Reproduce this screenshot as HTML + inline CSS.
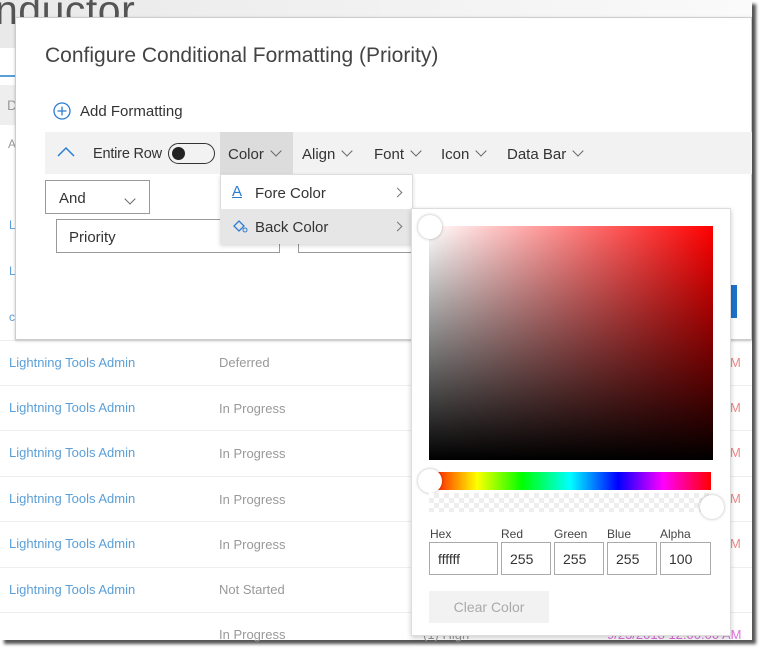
<!DOCTYPE html>
<html><head><style>
*{margin:0;padding:0;box-sizing:border-box}
body{width:765px;height:654px;background:#fff;position:relative;overflow:hidden;font-family:"Liberation Sans",sans-serif}
.a{position:absolute}
.row{position:absolute;left:0;width:752px;height:45px;border-top:1px solid #eee}
.lk{position:absolute;left:9px;color:#5a9fd8;font-size:13px}
.st{position:absolute;left:219px;color:#999;font-size:13px}
.chev{display:inline-block;width:8px;height:8px;border-right:1px solid #666;border-bottom:1px solid #666;transform:rotate(45deg);margin-left:8px;position:relative;top:-4px}
.rchev{position:absolute;width:7px;height:7px;border-right:1px solid #777;border-top:1px solid #777;transform:rotate(45deg)}
.tb{position:absolute;top:146px;font-size:15px;color:#333}
.lbl{position:absolute;top:527px;font-size:12px;color:#444}
.inp{position:absolute;top:542px;height:33px;border:1px solid #aaa;font-size:14px;color:#333;padding:8px 0 0 8px;background:#fff}
</style></head><body>
<div class="a" style="left:0;top:0;width:752px;height:640px;background:#fff;box-shadow:4px 4px 3px #555"></div>
<div class="a" style="left:0;top:0;width:752px;height:48px;background:linear-gradient(90deg,#e9e9e9,#f3f3f3 60%,#fafafa)"></div>
<div class="a" style="left:-5px;top:-13px;font-size:41px;color:#555;letter-spacing:0.5px">nductor</div>
<div class="a" style="left:0;top:75px;width:15px;height:2px;background:#5a9fd8"></div>
<div class="a" style="left:0;top:85px;width:15px;height:40px;background:#eee"></div>
<div class="a" style="left:7px;top:97px;font-size:14px;color:#999">D</div>
<div class="a" style="left:8px;top:137px;font-size:12px;color:#999">A</div>
<div class="a" style="left:9px;top:218px;font-size:12px;color:#5a9fd8">L</div>
<div class="a" style="left:9px;top:264px;font-size:12px;color:#5a9fd8">L</div>
<div class="a" style="left:9px;top:310px;font-size:12px;color:#5a9fd8">c</div>

<div class="row" style="top:340px"><span class="lk" style="top:14px">Lightning Tools Admin</span><span class="st" style="top:14px">Deferred</span><span class="a" style="left:730px;top:14px;color:#e88;font-size:13px">M</span></div>
<div class="row" style="top:385px"><span class="lk" style="top:14px">Lightning Tools Admin</span><span class="st" style="top:15px">In Progress</span><span class="a" style="left:730px;top:14px;color:#e88;font-size:13px">M</span></div>
<div class="row" style="top:430px"><span class="lk" style="top:14px">Lightning Tools Admin</span><span class="st" style="top:15px">In Progress</span><span class="a" style="left:730px;top:14px;color:#e88;font-size:13px">M</span></div>
<div class="row" style="top:476px"><span class="lk" style="top:14px">Lightning Tools Admin</span><span class="st" style="top:15px">In Progress</span><span class="a" style="left:730px;top:14px;color:#e88;font-size:13px">M</span></div>
<div class="row" style="top:521px"><span class="lk" style="top:14px">Lightning Tools Admin</span><span class="st" style="top:15px">In Progress</span><span class="a" style="left:730px;top:14px;color:#e88;font-size:13px">M</span></div>
<div class="row" style="top:567px"><span class="lk" style="top:14px">Lightning Tools Admin</span><span class="st" style="top:14px">Not Started</span></div>
<div class="row" style="top:612px"><span class="st" style="top:14px">In Progress</span><span class="a" style="left:423px;top:14px;color:#999;font-size:13px">(1) High</span><span class="a" style="left:607px;top:14px;color:#e070e0;font-size:13px">9/23/2018 12:00:00 AM</span></div>

<div class="a" style="left:15px;top:17px;width:737px;height:323px;background:#fff;border:1px solid #ccc;box-shadow:0 1px 3px rgba(0,0,0,.2)"></div>
<div class="a" style="left:45px;top:44px;font-size:21px;color:#444">Configure Conditional Formatting (Priority)</div>
<svg class="a" style="left:53px;top:102px" width="18" height="18"><circle cx="9" cy="9" r="8" fill="none" stroke="#2b7cd3" stroke-width="1.3"/><path d="M9 4.5v9M4.5 9h9" stroke="#2b7cd3" stroke-width="1.3"/></svg>
<div class="a" style="left:80px;top:103px;font-size:15px;color:#333">Add Formatting</div>
<div class="a" style="left:45px;top:132px;width:707px;height:42px;background:#f2f2f2"></div>
<div class="a" style="left:220px;top:132px;width:73px;height:42px;background:#dcdcdc"></div>
<svg class="a" style="left:57px;top:146px" width="18" height="12"><path d="M1 10L9 2l8 8" fill="none" stroke="#2b7cd3" stroke-width="1.5"/></svg>
<div class="tb" style="left:93px;font-size:14.5px;letter-spacing:-0.2px">Entire Row</div>
<div class="a" style="left:168px;top:143px;width:47px;height:21px;border:1.5px solid #333;border-radius:11px"><div class="a" style="left:3px;top:3px;width:13px;height:13px;border-radius:50%;background:#222"></div></div>
<div class="tb" style="left:228px">Color<span class="chev"></span></div>
<div class="tb" style="left:302px">Align<span class="chev"></span></div>
<div class="tb" style="left:374px">Font<span class="chev"></span></div>
<div class="tb" style="left:441px">Icon<span class="chev"></span></div>
<div class="tb" style="left:507px">Data Bar<span class="chev"></span></div>
<div class="a" style="left:45px;top:180px;width:105px;height:34px;border:1px solid #999"></div>
<div class="a" style="left:59px;top:190px;font-size:15px;color:#333">And</div>
<span class="chev a" style="left:118px;top:190px"></span>
<div class="a" style="left:56px;top:219px;width:224px;height:34px;border:1px solid #999;background:#fff"></div>
<div class="a" style="left:69px;top:229px;font-size:15px;color:#333">Priority</div>
<div class="a" style="left:298px;top:240px;width:115px;height:13px;border-left:1px solid #999;border-bottom:1px solid #999"></div>
<div class="a" style="left:731px;top:285px;width:6px;height:33px;background:#1d72c9"></div>

<div class="a" style="left:220px;top:174px;width:193px;height:70px;background:#fff;border:1px solid #ddd;box-shadow:0 2px 4px rgba(0,0,0,.15)"></div>
<div class="a" style="left:220px;top:209px;width:192px;height:35px;background:#e6e6e6"></div>
<div class="a" style="left:232px;top:183px;font-size:15px;color:#2b7cd3;text-decoration:underline">A</div>
<div class="a" style="left:255px;top:185px;font-size:15px;color:#333">Fore Color</div>
<svg class="a" style="left:231px;top:217px" width="18" height="18"><path d="M3 9l5-5 5 5-5 5z" fill="none" stroke="#2b7cd3" stroke-width="1.3"/><circle cx="14" cy="13" r="2" fill="none" stroke="#2b7cd3"/></svg>
<div class="a" style="left:255px;top:219px;font-size:15px;color:#333">Back Color</div>
<div class="rchev" style="left:394px;top:189px"></div>
<div class="rchev" style="left:394px;top:223px"></div>

<div class="a" style="left:411px;top:208px;width:320px;height:428px;background:#fff;border:1px solid #ddd;box-shadow:0 2px 5px rgba(0,0,0,.2)"></div>
<div class="a" style="left:429px;top:226px;width:284px;height:234px;background:linear-gradient(to top,#000,rgba(0,0,0,0)),linear-gradient(to right,#fff,#f00)"></div>
<div class="a" style="left:418px;top:215px;width:24px;height:24px;border-radius:50%;background:#fff;box-shadow:0 0 3px rgba(0,0,0,.3)"></div>
<div class="a" style="left:429px;top:472px;width:282px;height:18px;background:linear-gradient(to right,#f00,#ff0 17%,#0f0 33%,#0ff 50%,#00f 67%,#f0f 83%,#f00)"></div>
<div class="a" style="left:418px;top:469px;width:24px;height:24px;border-radius:50%;background:#fff;box-shadow:0 0 3px rgba(0,0,0,.3)"></div>
<div class="a" style="left:429px;top:493px;width:282px;height:19px;background:repeating-conic-gradient(#eee 0 25%,#fff 0 50%) 0 0/10px 10px"></div>
<div class="a" style="left:700px;top:495px;width:24px;height:24px;border-radius:50%;background:#fff;box-shadow:0 0 3px rgba(0,0,0,.3)"></div>
<div class="lbl" style="left:430px">Hex</div>
<div class="lbl" style="left:501px">Red</div>
<div class="lbl" style="left:554px">Green</div>
<div class="lbl" style="left:607px">Blue</div>
<div class="lbl" style="left:660px">Alpha</div>
<div class="inp" style="left:429px;width:69px">ffffff</div>
<div class="inp" style="left:501px;width:50px">255</div>
<div class="inp" style="left:554px;width:50px">255</div>
<div class="inp" style="left:607px;width:50px">255</div>
<div class="inp" style="left:660px;width:51px">100</div>
<div class="a" style="left:429px;top:591px;width:120px;height:32px;background:#f2f2f2;color:#aaa;font-size:14px;text-align:center;line-height:32px">Clear Color</div>
</body></html>
